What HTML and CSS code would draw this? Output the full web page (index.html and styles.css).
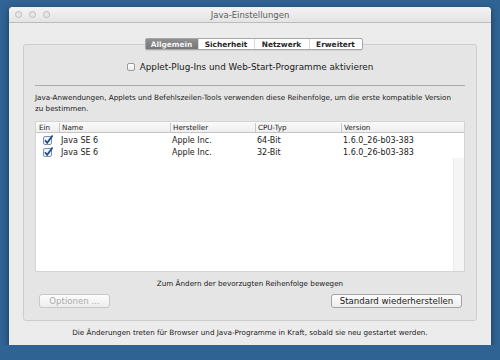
FILE: index.html
```html
<!DOCTYPE html>
<html lang="de">
<head>
	<meta charset="UTF-8">
	<title>Java-Einstellungen</title>
	<link rel="stylesheet" href="styles.css">
</head>
<body>
	<div class="window">
		<div class="titlebar">
			<div class="lights"><span></span><span></span><span></span></div>
			<div class="title">Java-Einstellungen</div>
		</div>
		<div class="content">
			<div class="tabs">
				<div class="tab on">Allgemein</div>
				<div class="tab">Sicherheit</div>
				<div class="tab">Netzwerk</div>
				<div class="tab">Erweitert</div>
			</div>
			<div class="box">
				<label class="enable"><span class="cb"></span>Applet-Plug-Ins und Web-Start-Programme aktivieren</label>
				<div class="sep"></div>
				<p class="info">Java-Anwendungen, Applets und Befehlszeilen-Tools verwenden diese Reihenfolge, um die erste kompatible Version<br>zu bestimmen.</p>
				<div class="table">
					<div class="row head">
						<div class="c1">Ein</div>
						<div class="c2">Name</div>
						<div class="c3">Hersteller</div>
						<div class="c4">CPU-Typ</div>
						<div class="c5">Version</div>
						<div class="c6"></div>
					</div>
					<div class="row">
						<div class="c1"><svg width="11" height="10" viewBox="0 0 11 10"><rect x="0.5" y="1.5" width="8" height="8" rx="1.5" fill="#f2f5fa" stroke="#7f92ad"/><path d="M2 5.2 L4.2 7.8 L9.6 0.6" fill="none" stroke="#1b4a8c" stroke-width="1.7"/></svg></div>
						<div class="c2">Java SE 6</div>
						<div class="c3">Apple Inc.</div>
						<div class="c4">64-Bit</div>
						<div class="c5">1.6.0_26-b03-383</div>
						<div class="c6"></div>
					</div>
					<div class="row">
						<div class="c1"><svg width="11" height="10" viewBox="0 0 11 10"><rect x="0.5" y="1.5" width="8" height="8" rx="1.5" fill="#f2f5fa" stroke="#7f92ad"/><path d="M2 5.2 L4.2 7.8 L9.6 0.6" fill="none" stroke="#1b4a8c" stroke-width="1.7"/></svg></div>
						<div class="c2">Java SE 6</div>
						<div class="c3">Apple Inc.</div>
						<div class="c4">32-Bit</div>
						<div class="c5">1.6.0_26-b03-383</div>
						<div class="c6"></div>
					</div>
					<div class="rest"><div class="c6"></div></div>
				</div>
				<div class="hint">Zum Ändern der bevorzugten Reihenfolge bewegen</div>
				<div class="buttons">
					<div class="btn off">Optionen ...</div>
					<div class="btn">Standard wiederherstellen</div>
				</div>
			</div>
			<div class="footer">Die Änderungen treten für Browser und Java-Programme in Kraft, sobald sie neu gestartet werden.</div>
		</div>
	</div>
</body>
</html>
```
FILE: styles.css
```css
*{margin: 0;padding: 0;box-sizing: border-box;}
body{background: #2f6394;font-family: "DejaVu Sans", "Liberation Sans", sans-serif;font-size: 7.2px;color: #1a1a1a;}
.window{width: 482px;height: 338px;margin: 7px 0 0 9px;background: #ececec;border-radius: 4px 4px 0 0;box-shadow: 0 2px 6px rgba(0,0,0,0.45);display: flex;flex-direction: column;}
.titlebar{height: 16px;background: linear-gradient(#f3f3f3, #e4e4e4);border-bottom: 1px solid #bcbcbc;border-radius: 4px 4px 0 0;display: flex;align-items: center;position: relative;}
.lights{display: flex;gap: 7px;padding-left: 6px;}
.lights span{width: 7px;height: 7px;border-radius: 50%;background: #e6e6e6;border: 1px solid #bdbdbd;}
.title{position: absolute;left: 0;right: 0;text-align: center;color: #5e5e5e;font-size: 8.5px;}
.content{flex: 1;display: flex;flex-direction: column;padding: 15px 14px 0;}
.tabs{align-self: center;display: flex;height: 12px;margin-left: 7px;position: relative;z-index: 1;background: #fff;border: 1px solid #a8a8a8;border-radius: 2px;box-shadow: 0 1px 0 rgba(0,0,0,0.08);}
.tab{display: flex;align-items: center;justify-content: center;font-weight: bold;font-size: 7.4px;color: #262626;border-left: 1px solid #d9d9d9;}
.tab:nth-child(1){width: 52px;border-left: none;}
.tab:nth-child(2){width: 56px;}
.tab:nth-child(3){width: 55px;}
.tab:nth-child(4){width: 53px;}
.tab.on{background: linear-gradient(#8f8f8f, #767676);color: #f4f4f4;}
.box{height: 277px;margin-top: -6px;background: #e5e5e5;border: 1px solid #cdcdcd;border-radius: 3px;padding: 0 11px;display: flex;flex-direction: column;}
.enable{display: flex;align-items: center;justify-content: center;gap: 5px;font-size: 8.8px;height: 12px;margin-top: 16px;}
.cb{width: 8px;height: 8px;border: 1px solid #9a9a9a;border-radius: 2px;background: linear-gradient(#fff, #ebebeb);}
.sep{height: 1px;background: #a9a9a9;margin-top: 12px;}
.info{margin-top: 6px;line-height: 11px;white-space: nowrap;}
.table{margin-top: 7px;height: 151px;background: #fff;display: flex;flex-direction: column;border: 1px solid #d4d4d4;}
.row{display: flex;height: 12px;align-items: center;font-size: 8px;}
.row div{padding-left: 2px;white-space: nowrap;}
.head{height: 11px;font-size: 7.2px;background: linear-gradient(#fbfbfb, #eeeeee);border-bottom: 1px solid #c4c4c4;margin-bottom: 1px;}
.head div + div{border-left: 1px solid #c8c8c8;}
.row .c1{width: 23px;padding-left: 3px;}
.c2{width: 111px;}
.c3{width: 85px;}
.c4{width: 86px;}
.c5{width: 112px;}
.c6{flex: 1;}
.row .c1 svg{display: block;margin-left: 4px;}
.rest{flex: 1;display: flex;}
.rest .c6{margin-left: 417px;background: #f5f5f5;border-left: 1px solid #ededed;}
.hint{text-align: center;margin-top: 6px;line-height: 11px;}
.buttons{display: flex;justify-content: space-between;margin-top: 5px;padding: 0 3px 0 4px;}
.btn{height: 14px;width: 131px;display: flex;align-items: center;justify-content: center;white-space: nowrap;font-size: 8.6px;background: linear-gradient(#fdfdfd, #ededed);border: 1px solid #a3a3a3;border-radius: 3px;}
.btn.off{width: 71px;color: #ababab;border-color: #c8c8c8;}
.footer{text-align: center;margin-top: 6px;line-height: 11px;}
```
